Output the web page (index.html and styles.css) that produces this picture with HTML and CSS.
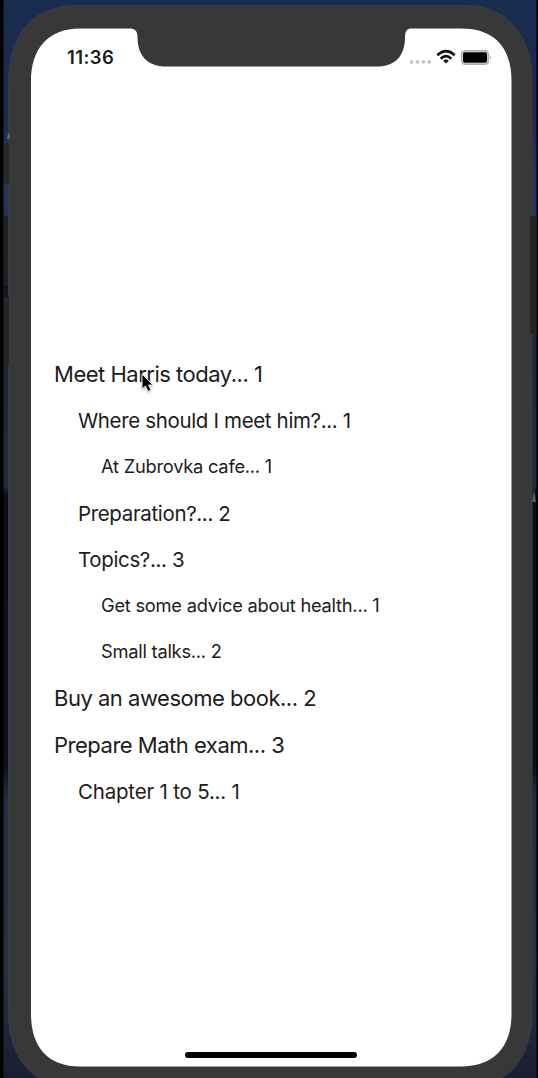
FILE: index.html
```html
<!DOCTYPE html>
<html lang="en">
<head>
<meta charset="utf-8">
<title>Tasks</title>
<link rel="stylesheet" href="styles.css">
</head>
<body>
<div class="desktop">
  <svg class="backdrop" width="538" height="1078" viewBox="0 0 538 1078" aria-hidden="true">
    <defs>
      <linearGradient id="sky" x1="0" y1="0" x2="0" y2="1">
        <stop offset="0" stop-color="#192d50"/>
        <stop offset=".1" stop-color="#1b2a4b"/>
        <stop offset=".18" stop-color="#26375f"/>
        <stop offset=".3" stop-color="#1b243b"/>
        <stop offset=".45" stop-color="#242a3e"/>
        <stop offset=".46" stop-color="#080e1b"/>
        <stop offset=".71" stop-color="#0a101e"/>
        <stop offset=".74" stop-color="#252c43"/>
        <stop offset=".9" stop-color="#292f45"/>
        <stop offset="1" stop-color="#191e33"/>
      </linearGradient>
    </defs>
    <rect width="538" height="1078" fill="#000"/>
    <rect x="3.5" width="533" height="1078" fill="url(#sky)"/>
    <path d="M8.500 84C8.500 34 32 5.500 78 5.500H463C508 5.500 532 34 532 84V1012C532 1058 508 1088 463 1088H78C32 1088 8.500 1058 8.500 1012Z" fill="#383838" stroke="#3b3d43"/>
    <rect x="4" y="143" width="5" height="41" fill="#292a2b"/>
    <rect x="4" y="216" width="4" height="70" fill="#202124"/>
    <rect x="4" y="286" width="4" height="11" fill="#111524"/>
    <rect x="4" y="297" width="5" height="69" fill="#252625"/>
    <rect x="530" y="216" width="6.500" height="118" fill="#242424"/>
    <path d="M8 133l2 3-1 3h-2z" fill="#65718a"/>
    <path d="M534 490l2 12h-4z" fill="#555b6b"/>
    <path d="M31 81C31 49 48 28.500 80 28.500H129C135 28.500 137.500 31 137.500 37C137.500 56 148 66.500 166 66.500H377C395 66.500 405 56 405 37C405 31 407 28.500 412 28.500H461C494 28.500 511.500 47 511.500 81V1014C511.500 1047 494 1066.500 461 1066.500H80C48 1066.500 31 1047 31 1014Z" fill="#fff"/>
  </svg>
  <main class="screen">
    <header class="status">
      <span class="time">11:36</span>
      <svg class="indicators" width="82" height="18" viewBox="0 0 82 18" aria-hidden="true">
        <g fill="#c5c5c5"><circle cx="1.500" cy="13.800" r="1.900"/><circle cx="7.500" cy="13.800" r="1.900"/><circle cx="13.300" cy="13.800" r="1.900"/><circle cx="19.200" cy="13.800" r="1.900"/></g>
        <g fill="none" stroke="#111" stroke-width="2.600"><path d="M27.300 7.200Q36 -.8 44.700 7.200"/><path d="M30.700 10.700Q36 5.700 41.300 10.700"/></g>
        <path d="M33.200 12.800Q36 10.300 38.800 12.800L36 15.500Z" fill="#111"/>
        <rect x="51.700" y="2.900" width="26.600" height="13.200" rx="3.500" fill="#fff" stroke="#b0b0b0" stroke-width="1.800"/>
        <rect x="53" y="4.200" width="24" height="10.600" rx="1.800" fill="#000"/>
        <path d="M80.300 7.500Q82 9.400 80.300 11.300Z" fill="#777"/>
      </svg>
    </header>
    <ul class="tasks">
      <li class="task top">Meet Harris today... 1</li>
      <li class="task sub">Where should I meet him?... 1</li>
      <li class="task detail">At Zubrovka cafe... 1</li>
      <li class="task sub">Preparation?... 2</li>
      <li class="task sub">Topics?... 3</li>
      <li class="task detail">Get some advice about health... 1</li>
      <li class="task detail">Small talks... 2</li>
      <li class="task top">Buy an awesome book... 2</li>
      <li class="task top">Prepare Math exam... 3</li>
      <li class="task sub chapter">Chapter 1 to 5... 1</li>
    </ul>
    <div class="home"></div>
  </main>
  <svg class="cursor" width="18" height="24" viewBox="0 0 18 24" aria-hidden="true">
    <path d="M3 2V17L6.500 14L9 19.500L12 18L9.500 13H14Z" fill="#000" stroke="#e8e8e8" stroke-width="1"/>
  </svg>
</div>
</body>
</html>
```
FILE: styles.css
```css
* { box-sizing: border-box; }
body { margin: 0; overflow: hidden; font-family: Inter, "Liberation Sans", sans-serif; color: #1c1c1c; }
.desktop { position: relative; width: 538px; height: 1078px; overflow: hidden; }
.backdrop { position: absolute; inset: 0; }
.screen { position: relative; display: flex; flex-direction: column; margin: 28px 26px 0 31px; height: 1038px; }
.status { display: flex; justify-content: space-between; align-items: flex-start; height: 323px; padding: 20px 20px 0 36px; }
.time { font-size: 18.5px; line-height: 18px; font-weight: 600; letter-spacing: 0.4px; }
.indicators { display: block; }
.tasks { list-style: none; margin: 0; padding: 0 0 0 23px; flex: 1; }
.task { height: 46.35px; line-height: 46px; white-space: pre; }
.top { font-size: 22px; letter-spacing: -0.49px; }
.sub { font-size: 20.5px; line-height: 47px; letter-spacing: -0.35px; padding-left: 24px; }
.chapter { letter-spacing: -0.2px; }
.detail { font-size: 18.3px; line-height: 44px; letter-spacing: -0.24px; padding-left: 47px; }
.home { width: 172px; height: 6px; border-radius: 3px; background: #000; margin: 0 0 8.5px 154px; }
.cursor { position: absolute; left: 139px; top: 372px; filter: drop-shadow(0 1px 1px #0004); }
```
